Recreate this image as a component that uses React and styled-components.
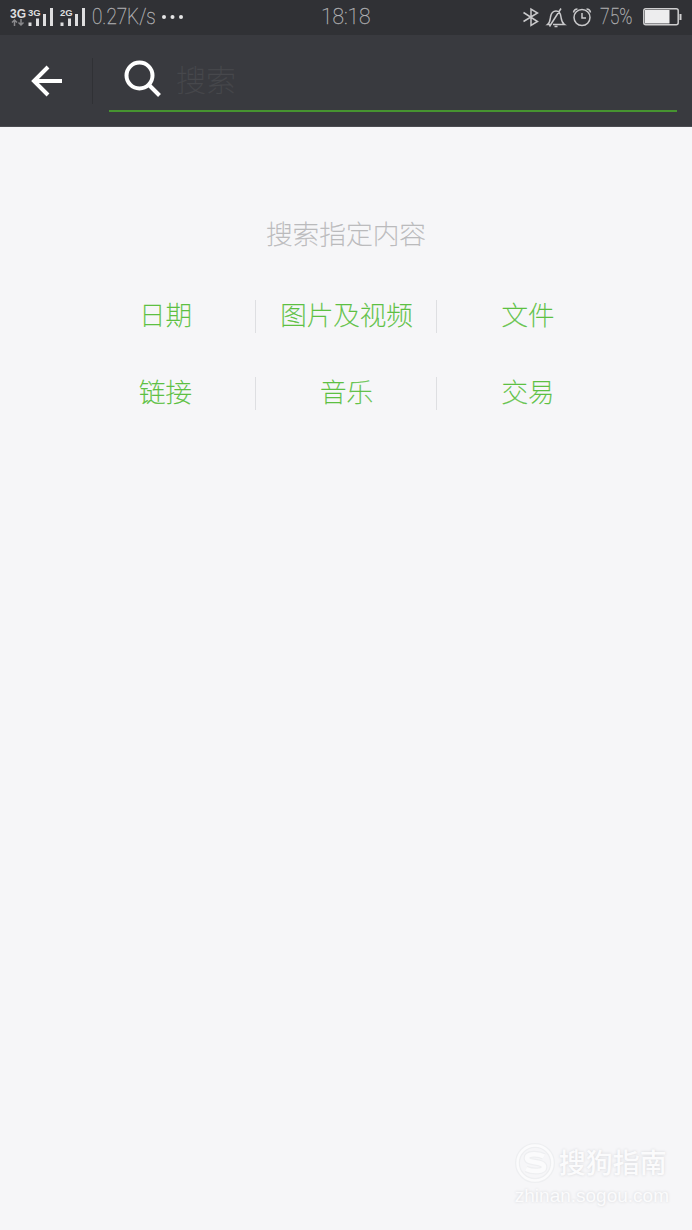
import React from "react";
import styled, { createGlobalStyle } from "styled-components";

const GlobalStyle = createGlobalStyle`
  * {
    box-sizing: border-box;
  }

  body {
    margin: 0;
    background: #f6f6f8;
    font-family: "Noto Sans CJK SC", sans-serif;
  }
`;

const Screen = styled.div`
  display: flex;
  flex-direction: column;
  height: 1230px;
  overflow: hidden;
`;

const StatusBar = styled.div`
  display: grid;
  grid-template-columns: 1fr auto 1fr;
  align-items: center;
  height: 35px;
  padding: 0 10px 1px;
  background: #303135;
  color: #b4b4b6;
`;

const StatusGroup = styled.div`
  display: flex;
  align-items: center;
  justify-content: ${(props) => (props.$end ? "flex-end" : "flex-start")};
`;

const StatusText = styled.span`
  display: inline-block;
  width: ${(props) => props.$width}px;
  font-family: Roboto, sans-serif;
  font-size: 22px;
  font-weight: 100;
  line-height: 32px;
  white-space: nowrap;
  -webkit-text-stroke: 0.3px;

  span {
    display: inline-block;
    transform: scaleX(${(props) => props.$scale || 1});
    transform-origin: left;
  }
`;

const Header = styled.div`
  display: flex;
  align-items: center;
  height: 92px;
  padding: 0 15px 0 30px;
  background: #393a3f;
  border-bottom: 1px solid #4b4c51;
`;

const HeaderDivider = styled.div`
  width: 1px;
  height: 46px;
  margin: 0 16px 0 29px;
  background: #303135;
`;

const SearchField = styled.div`
  display: flex;
  align-items: center;
  flex: 1;
  height: 62px;
  padding: 0 0 1px 14px;
  border-bottom: 2px solid #469430;
`;

const Placeholder = styled.span`
  margin: -3px 0 0 13px;
  color: #47484c;
  font-size: 30px;
  font-weight: 100;
  line-height: 44px;
  -webkit-text-stroke: 0.3px;
`;

const Content = styled.div`
  display: flex;
  flex: 1;
  flex-direction: column;
  align-items: center;
  padding-top: 86px;
`;

const Title = styled.div`
  color: #b9b9bb;
  font-size: 26.7px;
  font-weight: 100;
  line-height: 40px;
  -webkit-text-stroke: 0.35px;
`;

const Filters = styled.div`
  display: grid;
  grid-template-columns: repeat(3, 181px);
  grid-auto-rows: 77px;
  margin-top: 25px;
  align-items: center;
`;

const Filter = styled.div`
  height: 33px;
  padding-left: 2px;
  border-right: ${(props) => (props.$last ? "0" : "1px solid #dedfe2")};
  color: #58bf3c;
  font-size: 26.5px;
  font-weight: 100;
  line-height: 28px;
  text-align: center;
  -webkit-text-stroke: 0.35px;
`;

const Watermark = styled.div`
  align-self: flex-end;
  margin: auto 23px 22px 0;
  color: #fbfbfc;
  text-shadow: 0 0 3px #d3d4d8;
`;

const Brand = styled.div`
  display: flex;
  align-items: center;
  gap: 4px;
  height: 42px;
  font-size: 27px;
  font-weight: 500;
  line-height: 36px;
`;

const BrandName = styled.span`
  margin-top: -3px;
`;

const Site = styled.div`
  font-family: "Liberation Sans", sans-serif;
  font-size: 19px;
  line-height: 24px;
`;

const filters = ["日期", "图片及视频", "文件", "链接", "音乐", "交易"];

const SignalIcon = () => (
  <svg width="82" height="24" viewBox="0 0 82 24" fill="#dededf">
    <g fontFamily="Liberation Sans, sans-serif" fontWeight="700">
      <text x="0" y="12.5" fontSize="12">
        3G
      </text>
      <text x="18" y="11" fontSize="9.5">
        3G
      </text>
      <text x="50" y="11" fontSize="9.5">
        2G
      </text>
    </g>
    <g fill="none" stroke="#89898c" strokeWidth="1.5">
      <path d="M4.500 21v-6M2 17.500l2.500-2.500L7 17.500M11 14v6M8.500 17.500l2.500 2.500 2.500-2.500" />
    </g>
    <path d="M18.500 17.500h3v3.500h-3zM26 13.500h3V21h-3zM33 9h3v12h-3zM40 3h3v18h-3zM50.500 17.500h3v3.500h-3zM58 13.500h3V21h-3zM65 9h3v12h-3zM72 3h3v18h-3z" />
  </svg>
);

const MoreIcon = () => (
  <svg width="24" height="24" viewBox="0 0 24 24" fill="#e5e5e6">
    <circle cx="4" cy="12" r="2" />
    <circle cx="12.500" cy="12" r="2" />
    <circle cx="21" cy="12" r="2" />
  </svg>
);

const StatusIcons = () => (
  <svg
    width="78"
    height="24"
    viewBox="0 0 78 24"
    fill="none"
    stroke="#c9c9cb"
    strokeWidth="1.5"
  >
    <path d="M1.500 7.500l14 9-6.500 4V4l6.500 4-14 8.500" />
    <path d="M28 19.500h-2.500c2.500-2 2.500-4 3-7.500 .700-4 2.500-6 5.500-6s4.500 2 5 6c.500 3.500 .500 5.500 3.500 7.500H31M32.500 21.500h3M27.500 21.500L39 3.500" />
    <circle cx="60" cy="12.500" r="8" />
    <path d="M60 8v5h4M51.500 7.500c.500-2.500 2-3.500 4-3.500M68.500 7.500c-.500-2.500-2-3.500-4-3.500" />
  </svg>
);

const BatteryIcon = () => (
  <svg width="39" height="20" viewBox="0 0 39 20">
    <rect
      x="0.800"
      y="1.800"
      width="34.400"
      height="15.900"
      rx="2"
      fill="none"
      stroke="#cfcfd0"
      strokeWidth="1.500"
    />
    <path d="M2 3h24.500V16.500H2z" fill="#ededee" />
    <path d="M36.500 7h2v6h-2z" fill="#cfcfd0" />
  </svg>
);

const BackIcon = () => (
  <svg width="33" height="32" viewBox="0 0 33 32">
    <path
      d="M18 2L4 16l14 14M4 16h28"
      fill="none"
      stroke="#fff"
      strokeWidth="4"
    />
  </svg>
);

const SearchIcon = () => (
  <svg width="40" height="38" viewBox="0 0 40 38">
    <g fill="none" stroke="#fff" strokeWidth="4">
      <circle cx="16.500" cy="15.500" r="13" />
      <path d="M26 25l10.500 10.500" />
    </g>
  </svg>
);

const LogoIcon = () => (
  <svg width="40" height="40" viewBox="0 0 40 40" fill="none">
    <circle cx="20" cy="20" r="17.500" stroke="#eeeff1" strokeWidth="5" />
    <circle cx="20" cy="20" r="17.500" stroke="#fbfbfc" strokeWidth="2.500" />
    <path
      d="M29 13.500c-5-3-17-3.500-17 1.500 0 6 17 2.500 17 9 0 5-11 5-18 2"
      stroke="#eeeff1"
      strokeWidth="7"
    />
    <path
      d="M29 13.500c-5-3-17-3.500-17 1.500 0 6 17 2.500 17 9 0 5-11 5-18 2"
      stroke="#fbfbfc"
      strokeWidth="4.500"
    />
  </svg>
);

const App = () => {
  return (
    <Screen>
      <GlobalStyle />
      <StatusBar>
        <StatusGroup>
          <SignalIcon />
          <StatusText $width={68} $scale={0.86}>
            <span>0.27K/s</span>
          </StatusText>
          <MoreIcon />
        </StatusGroup>
        <StatusText $width={50} $scale={0.95}>
          <span>18:18</span>
        </StatusText>
        <StatusGroup $end>
          <StatusIcons />
          <StatusText $width={43} $scale={0.8}>
            <span>75%</span>
          </StatusText>
          <BatteryIcon />
        </StatusGroup>
      </StatusBar>
      <Header>
        <BackIcon />
        <HeaderDivider />
        <SearchField>
          <SearchIcon />
          <Placeholder>搜索</Placeholder>
        </SearchField>
      </Header>
      <Content>
        <Title>搜索指定内容</Title>
        <Filters>
          {filters.map((name, index) => (
            <Filter key={name} $last={index % 3 === 2}>
              {name}
            </Filter>
          ))}
        </Filters>
        <Watermark>
          <Brand>
            <LogoIcon />
            <BrandName>搜狗指南</BrandName>
          </Brand>
          <Site>zhinan.sogou.com</Site>
        </Watermark>
      </Content>
    </Screen>
  );
};

export default App;
